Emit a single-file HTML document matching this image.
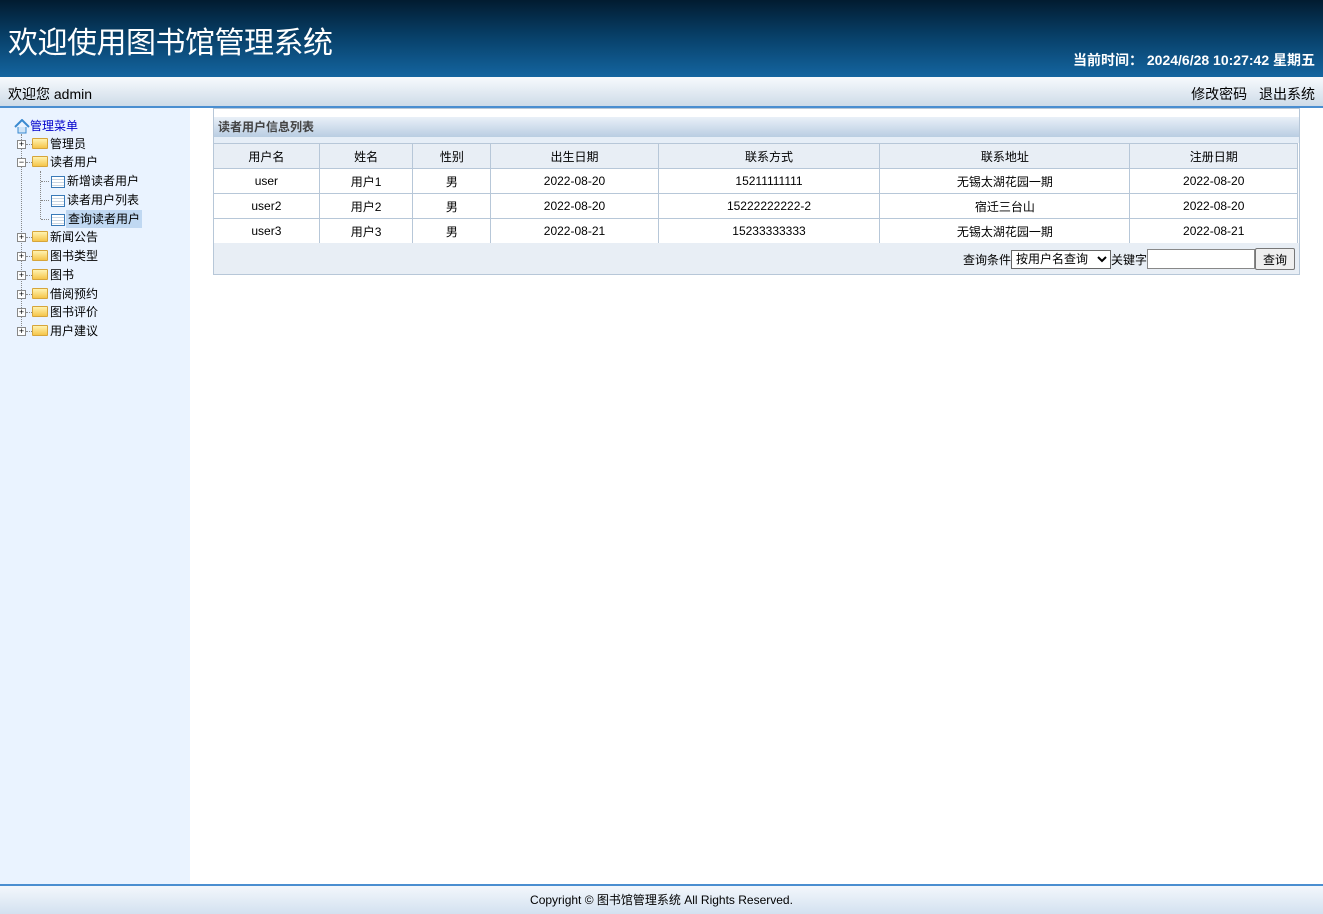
<!DOCTYPE html>
<html><head><meta charset="utf-8"><style>
*{margin:0;padding:0;box-sizing:border-box}
body{width:1323px;height:914px;overflow:hidden;font-family:"Liberation Sans","Noto Sans CJK SC",sans-serif;font-size:12px;color:#000;background:#fff;position:relative}
#hd{position:absolute;left:0;top:0;width:1323px;height:77px;background:linear-gradient(#021b30 0%,#073e66 45%,#1465a0 100%)}
#hd h1{position:absolute;left:8px;top:18px;font-size:30px;font-weight:normal;color:#fff;letter-spacing:-0.5px}
#hd .t{position:absolute;right:8px;top:50px;color:#fff;font-size:14px;font-weight:bold}
#bar{position:absolute;left:0;top:77px;width:1323px;height:31px;background:linear-gradient(#f7fafd,#cedbe8);border-bottom:2px solid #4a8ed0}
#bar .l{position:absolute;left:8px;top:7px;font-size:14px}
#bar .r{position:absolute;right:8px;top:7px;font-size:14px;word-spacing:8px}
#side{position:absolute;left:0;top:108px;width:190px;height:776px;background:#eaf3ff}
.n{position:absolute;height:18px;line-height:18px;font-size:12px}
.pm{position:absolute;width:9px;height:9px;border:1px solid #888;background:#fff;font-size:9px;line-height:7px;text-align:center;color:#000}
.fd{position:absolute;width:16px;height:11px;background:linear-gradient(#fff3b0,#f5c54a);border:1px solid #d6a53a;border-radius:1px}
.pg{position:absolute;width:14px;height:12px;border:1px solid #3a7ab8;background:repeating-linear-gradient(#fff 0 2px,#c9d5e2 2px 3px)}
.dl{position:absolute;border-left:1px dotted #888}
.dh{position:absolute;border-top:1px dotted #888;width:8px}
#panel{position:absolute;left:213px;top:108px;width:1087px;height:167px;border:1px solid #b7c7d8;background:#fff}
#panel .tt{position:absolute;left:0;top:8px;width:1085px;height:20px;background:linear-gradient(#e9f0f8,#b9cde2);font-weight:bold;color:#444;padding-left:4px;line-height:20px}
#panel .sub{position:absolute;left:0;top:28px;width:1085px;height:6px;background:#e6eef7}
table{position:absolute;left:-1px;top:34px;border-collapse:collapse}
td{border:1px solid #b7c7d8;height:25px;text-align:center;font-size:12px}
tr.h td{background:#e8eef5}
#q{position:absolute;left:0;top:134px;width:1085px;height:31px;background:#e8eef5;font-size:12px}
#q .w{position:absolute;right:4px;top:5px;display:flex;align-items:center}
select{height:19px;width:100px;font-size:12px;font-family:inherit;border:1px solid #666;background:#fff}
input{height:20px;width:108px;border:1px solid #888}
button{height:22px;width:40px;font-size:12px;font-family:inherit;border:1px solid #777;background:#efefef;border-radius:2px}
#ft{position:absolute;left:0;top:884px;width:1323px;height:30px;border-top:2px solid #4a8ed0;background:linear-gradient(#f3f7fc,#d3e1f0);text-align:center;line-height:28px;font-size:12px}
</style></head><body>
<div id="hd"><h1>欢迎使用图书馆管理系统</h1><div class="t">当前时间：&nbsp;2024/6/28 10:27:42 星期五</div></div>
<div id="bar"><div class="l">欢迎您 admin</div><div class="r">修改密码 退出系统</div></div>
<div id="side">
<svg style="position:absolute;left:14px;top:11px" width="16" height="15" viewBox="0 0 16 15"><path d="M1 8 L8 1 L15 8" fill="none" stroke="#3a8ad0" stroke-width="2"/><path d="M4 8 V14 H12 V8" fill="#cfe4f7" stroke="#3a8ad0"/></svg>
<div class="n" style="left:30px;top:9px;color:#0000cc">管理菜单</div>
<div class="dl" style="left:21px;top:26px;height:198px"></div>
<div class="dl" style="left:40px;top:63px;height:48px"></div>
<div class="pm" style="left:17px;top:32px">+</div><div class="dh" style="left:26px;top:36px"></div><div class="fd" style="left:32px;top:30px"></div><div class="n" style="left:50px;top:27px">管理员</div>
<div class="pm" style="left:17px;top:50px">−</div><div class="dh" style="left:26px;top:54px"></div><div class="fd" style="left:32px;top:48px"></div><div class="n" style="left:50px;top:45px">读者用户</div>
<div class="dh" style="left:41px;top:73px"></div><div class="pg" style="left:51px;top:68px"></div><div class="n" style="left:67px;top:64px">新增读者用户</div>
<div class="dh" style="left:41px;top:92px"></div><div class="pg" style="left:51px;top:87px"></div><div class="n" style="left:67px;top:83px">读者用户列表</div>
<div class="dh" style="left:41px;top:111px"></div><div class="pg" style="left:51px;top:106px"></div><div class="n" style="left:66px;top:102px;background:#c0d8f2;padding:0 2px">查询读者用户</div>
<div class="pm" style="left:17px;top:125px">+</div><div class="dh" style="left:26px;top:129px"></div><div class="fd" style="left:32px;top:123px"></div><div class="n" style="left:50px;top:120px">新闻公告</div>
<div class="pm" style="left:17px;top:144px">+</div><div class="dh" style="left:26px;top:148px"></div><div class="fd" style="left:32px;top:142px"></div><div class="n" style="left:50px;top:139px">图书类型</div>
<div class="pm" style="left:17px;top:163px">+</div><div class="dh" style="left:26px;top:167px"></div><div class="fd" style="left:32px;top:161px"></div><div class="n" style="left:50px;top:158px">图书</div>
<div class="pm" style="left:17px;top:182px">+</div><div class="dh" style="left:26px;top:186px"></div><div class="fd" style="left:32px;top:180px"></div><div class="n" style="left:50px;top:177px">借阅预约</div>
<div class="pm" style="left:17px;top:200px">+</div><div class="dh" style="left:26px;top:204px"></div><div class="fd" style="left:32px;top:198px"></div><div class="n" style="left:50px;top:195px">图书评价</div>
<div class="pm" style="left:17px;top:219px">+</div><div class="dh" style="left:26px;top:223px"></div><div class="fd" style="left:32px;top:217px"></div><div class="n" style="left:50px;top:214px">用户建议</div>
</div>
<div id="panel">
<div class="tt">读者用户信息列表</div><div class="sub"></div>
<table>
<tr class="h"><td style="width:106px">用户名</td><td style="width:94px">姓名</td><td style="width:78px">性别</td><td style="width:168px">出生日期</td><td style="width:222px">联系方式</td><td style="width:251px">联系地址</td><td style="width:168px">注册日期</td></tr>
<tr><td>user</td><td>用户1</td><td>男</td><td>2022-08-20</td><td>15211111111</td><td>无锡太湖花园一期</td><td>2022-08-20</td></tr>
<tr><td>user2</td><td>用户2</td><td>男</td><td>2022-08-20</td><td>15222222222-2</td><td>宿迁三台山</td><td>2022-08-20</td></tr>
<tr><td>user3</td><td>用户3</td><td>男</td><td>2022-08-21</td><td>15233333333</td><td>无锡太湖花园一期</td><td>2022-08-21</td></tr>
</table>
<div id="q"><div class="w">查询条件<select><option>按用户名查询</option></select>关键字<input><button>查询</button></div></div>
</div>
<div id="ft">Copyright © 图书馆管理系统 All Rights Reserved.</div>
</body></html>
